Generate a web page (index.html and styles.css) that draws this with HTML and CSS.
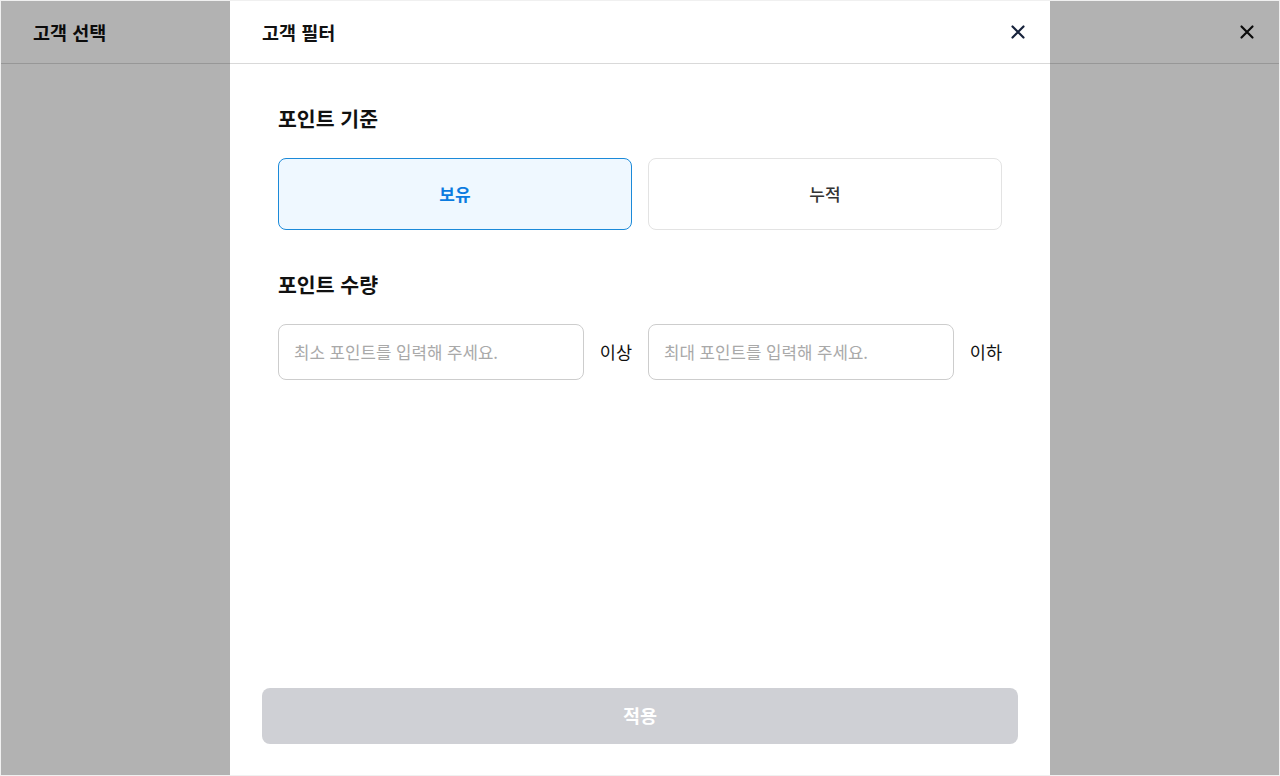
FILE: index.html
```html
<!DOCTYPE html>
<html lang="ko">
<head>
<meta charset="utf-8">
<title>고객 필터</title>
<link rel="stylesheet" href="styles.css">
</head>
<body>
<div class="page">
  <header class="page-header">
    <h1 class="page-title">고객 선택</h1>
    <button class="close-btn page-close" aria-label="닫기">
      <svg width="16" height="16" viewBox="0 0 16 16"><path d="M2.5 2.5 L13.5 13.5 M13.5 2.5 L2.5 13.5" stroke="currentColor" stroke-width="2.2" stroke-linecap="round"/></svg>
    </button>
  </header>
  <div class="overlay"></div>
  <div class="modal">
    <header class="modal-header">
      <h2 class="modal-title">고객 필터</h2>
      <button class="close-btn modal-close" aria-label="닫기">
        <svg width="16" height="16" viewBox="0 0 16 16"><path d="M2.5 2.5 L13.5 13.5 M13.5 2.5 L2.5 13.5" stroke="currentColor" stroke-width="2.2" stroke-linecap="round"/></svg>
      </button>
    </header>
    <div class="modal-body">
      <section class="section">
        <h3 class="section-title">포인트 기준</h3>
        <div class="options">
          <button class="option selected">보유</button>
          <button class="option">누적</button>
        </div>
      </section>
      <section class="section">
        <h3 class="section-title">포인트 수량</h3>
        <div class="range">
          <div class="range-item">
            <input class="input" type="text" placeholder="최소 포인트를 입력해 주세요.">
            <span class="suffix">이상</span>
          </div>
          <div class="range-item">
            <input class="input" type="text" placeholder="최대 포인트를 입력해 주세요.">
            <span class="suffix">이하</span>
          </div>
        </div>
      </section>
    </div>
    <footer class="modal-footer">
      <button class="apply" disabled>적용</button>
    </footer>
  </div>
</div>
</body>
</html>
```
FILE: styles.css
```css
* { box-sizing: border-box; }
html, body { margin: 0; padding: 0; }
body {
  font-family: "Noto Sans CJK KR", "Noto Sans", sans-serif;
  color: #111;
  background: #fff;
}
.page {
  position: relative;
  width: 1280px;
  height: 776px;
  overflow: hidden;
  background: #fff;
  border: 1px solid #f0f0f0;
}
.page-header {
  height: 63px;
  border-bottom: 1px solid #d8d8d8;
  display: flex;
  align-items: center;
  justify-content: space-between;
  padding: 0 20px 0 32px;
}
.page-title {
  margin: 0;
  font-size: 18.5px;
  font-weight: 700;
  color: #111;
}
.close-btn {
  border: 0;
  background: transparent;
  padding: 0;
  width: 24px;
  height: 24px;
  display: flex;
  align-items: center;
  justify-content: center;
  cursor: pointer;
}
.page-close { color: #111; }
.overlay {
  position: absolute;
  inset: 0;
  background: rgba(0, 0, 0, 0.3);
}
.modal {
  position: absolute;
  top: -1px;
  bottom: -1px;
  left: 229px;
  width: 820px;
  background: #fff;
  display: flex;
  flex-direction: column;
}
.modal-header {
  height: 64px;
  border-bottom: 1px solid #d9d9d9;
  display: flex;
  align-items: center;
  justify-content: space-between;
  padding: 0 20px 0 32px;
  flex: none;
}
.modal-title {
  margin: 0;
  font-size: 18.5px;
  font-weight: 700;
  color: #111;
}
.modal-close { color: #17223b; }
.modal-body {
  flex: 1;
  padding: 0 48px;
}
.section { margin-top: 40px; }
.section-title {
  margin: 0 0 26px;
  font-size: 20.5px;
  line-height: 28px;
  font-weight: 700;
  color: #111;
}
.options {
  display: grid;
  grid-template-columns: 1fr 1fr;
  gap: 16px;
}
.option {
  height: 72px;
  padding: 0 0 2px;
  border: 1px solid #e3e3e3;
  border-radius: 8px;
  background: #fff;
  font-family: inherit;
  font-size: 17px;
  font-weight: 500;
  color: #333;
  cursor: pointer;
}
.option.selected {
  border-color: #1b8ad9;
  background: #eff8ff;
  color: #0a7be0;
  font-weight: 700;
}
.range {
  display: grid;
  grid-template-columns: 1fr 1fr;
  gap: 16px;
}
.range-item {
  display: flex;
  align-items: center;
  gap: 16px;
}
.input {
  flex: 1;
  min-width: 0;
  height: 56px;
  border: 1px solid #cdcdcd;
  border-radius: 8px;
  padding: 0 15px 1px;
  font-family: inherit;
  font-size: 16.8px;
  color: #111;
  outline: none;
}
.input::placeholder { color: #a9a9a9; }
.suffix {
  font-size: 17.5px;
  padding-bottom: 2px;
  color: #111;
  white-space: nowrap;
}
.modal-footer {
  padding: 0 32px 32px;
  flex: none;
}
.apply {
  width: 100%;
  height: 56px;
  padding: 0 0 3px;
  border: 0;
  border-radius: 8px;
  background: #cfd0d5;
  color: #fff;
  font-family: inherit;
  font-size: 18.5px;
  font-weight: 700;
}
```
